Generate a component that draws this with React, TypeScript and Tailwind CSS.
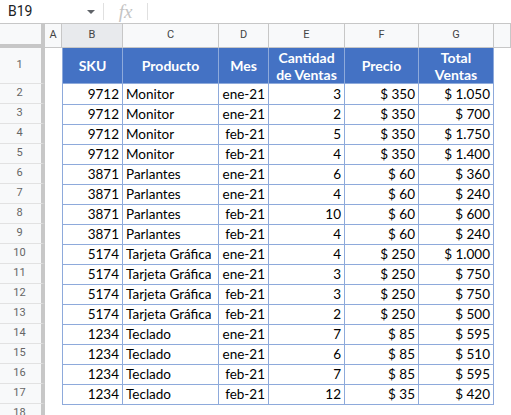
const rows: [string, string, string, string, string, string][] = [
  ['9712', 'Monitor', 'ene-21', '3', '$ 350', '$ 1.050'],
  ['9712', 'Monitor', 'ene-21', '2', '$ 350', '$ 700'],
  ['9712', 'Monitor', 'feb-21', '5', '$ 350', '$ 1.750'],
  ['9712', 'Monitor', 'feb-21', '4', '$ 350', '$ 1.400'],
  ['3871', 'Parlantes', 'ene-21', '6', '$ 60', '$ 360'],
  ['3871', 'Parlantes', 'ene-21', '4', '$ 60', '$ 240'],
  ['3871', 'Parlantes', 'feb-21', '10', '$ 60', '$ 600'],
  ['3871', 'Parlantes', 'feb-21', '4', '$ 60', '$ 240'],
  ['5174', 'Tarjeta Gráfica', 'ene-21', '4', '$ 250', '$ 1.000'],
  ['5174', 'Tarjeta Gráfica', 'ene-21', '3', '$ 250', '$ 750'],
  ['5174', 'Tarjeta Gráfica', 'feb-21', '3', '$ 250', '$ 750'],
  ['5174', 'Tarjeta Gráfica', 'feb-21', '2', '$ 250', '$ 500'],
  ['1234', 'Teclado', 'ene-21', '7', '$ 85', '$ 595'],
  ['1234', 'Teclado', 'ene-21', '6', '$ 85', '$ 510'],
  ['1234', 'Teclado', 'feb-21', '7', '$ 85', '$ 595'],
  ['1234', 'Teclado', 'feb-21', '12', '$ 35', '$ 420'],
];

const cols = 'grid grid-cols-[45px_17px_61px_96px_50px_76px_74px_75px_1fr]';
const letters = ['A', 'B', 'C', 'D', 'E', 'F', 'G', ''];
const headers = ['SKU', 'Producto', 'Mes', 'Cantidad de Ventas', 'Precio', 'Total Ventas'];

function RowHead({ n, h }: { n: number; h: string }) {
  return (
    <div
      className={`${h} flex items-center justify-center border-r-4 border-r-[#c7c7c7] border-b border-b-[#e2e2e2] bg-[#f8f9fa] text-[11px] text-[#666] font-['Roboto',sans-serif] pr-[2px]`}
    >
      {n}
    </div>
  );
}

export default function App() {
  return (
    <div className="w-[511px] h-[415px] overflow-hidden bg-white font-['Lato',sans-serif]">
      {/* formula bar */}
      <div className="h-6 flex items-center border-b border-[#c7c7c7] font-['Roboto',sans-serif]">
        <div className="w-[103px] flex items-center pl-[8px] pr-[8px] h-full">
          <span className="text-[14px] text-[#202124]">B19</span>
          <span className="ml-auto w-0 h-0 border-l-[4px] border-r-[4px] border-t-[4px] border-l-transparent border-r-transparent border-t-[#5f6368]" />
        </div>
        <div className="w-px h-[17px] bg-[#e0e0e0]" />
        <div className="w-[43px] flex justify-center">
          <span className="italic text-[19px] leading-none text-[#c4c4c4] font-['Liberation_Serif',serif]">fx</span>
        </div>
        <div className="w-px h-[17px] bg-[#e0e0e0]" />
      </div>

      {/* column letters */}
      <div className={`${cols} h-6 font-['Roboto',sans-serif] text-[11px] text-[#444]`}>
        <div className="bg-[#f8f9fa] border-r-4 border-r-[#c7c7c7] border-b-4 border-b-[#c7c7c7]" />
        {letters.map((l, i) => (
          <div
            key={i}
            className={`flex items-center justify-center border-r border-r-[#c7c7c7] border-b border-b-[#c7c7c7] ${
              l === 'B' ? 'bg-[#e8eaed]' : 'bg-[#f8f9fa]'
            }`}
          >
            {l}
          </div>
        ))}
      </div>

      {/* header row */}
      <div className={`${cols} h-9`}>
        <RowHead n={1} h="h-9" />
        <div />
        {headers.map((h, i) => (
          <div
            key={h}
            className={`flex items-center justify-center text-center bg-[#4472c4] text-white font-bold text-[14px] leading-[17px] border-r border-b border-[#8eaadb] ${
              i === 0 ? 'border-l' : ''
            }`}
          >
            {h === 'Cantidad de Ventas' ? (
              <span>
                Cantidad
                <br />
                de Ventas
              </span>
            ) : h === 'Total Ventas' ? (
              <span>
                Total
                <br />
                Ventas
              </span>
            ) : (
              h
            )}
          </div>
        ))}
        <div />
      </div>

      {/* data rows */}
      {rows.map((r, idx) => (
        <div key={idx} className={`${cols} h-5 text-[13.5px] text-black`}>
          <RowHead n={idx + 2} h="h-5" />
          <div />
          {r.map((v, i) => (
            <div
              key={i}
              className={`flex items-center px-[3px] whitespace-nowrap border-r border-b border-[#8eaadb] ${
                i === 1 ? 'justify-start' : 'justify-end'
              } ${i === 0 ? 'border-l' : ''}`}
            >
              {v}
            </div>
          ))}
          <div />
        </div>
      ))}

      <div className={`${cols} h-5`}>
        <RowHead n={18} h="h-5" />
      </div>
    </div>
  );
}
